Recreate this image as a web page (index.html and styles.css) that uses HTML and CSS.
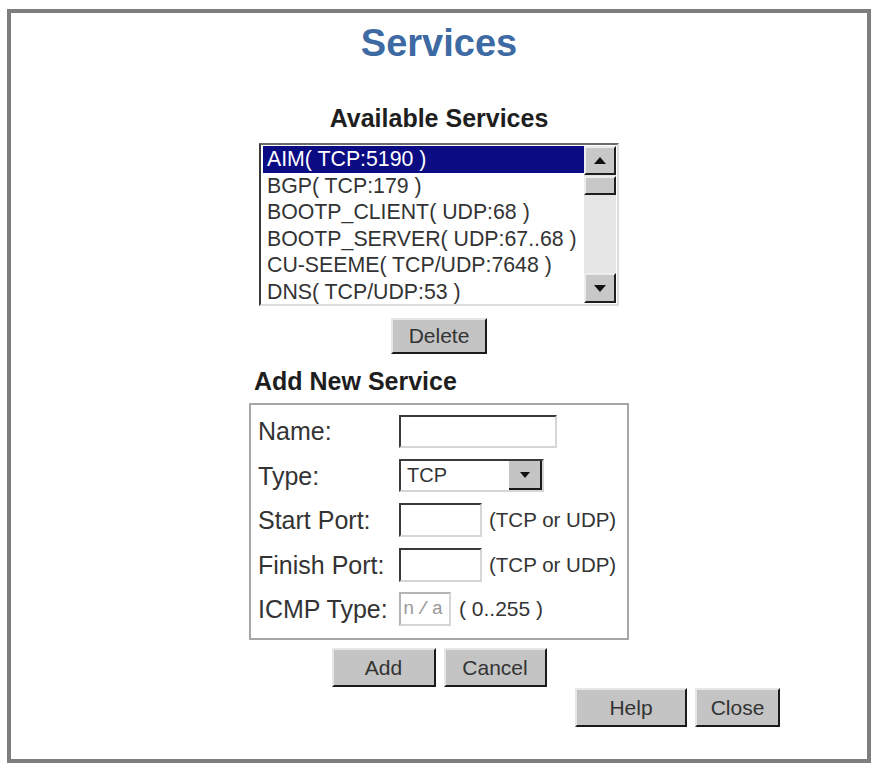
FILE: index.html
```html
<html>
    <head>
        <meta charset="utf-8">
        <link rel="stylesheet" href="styles.css">
    </head>
    <body>
        <div id="frame">
            <h1 class="title">Services</h1>

            <div class="column">
                <h2 class="heading centered">Available Services</h2>

                <div class="listbox">
                    <div class="options">
                        <div class="option selected">AIM( TCP:5190 )</div>
                        <div class="option">BGP( TCP:179 )</div>
                        <div class="option">BOOTP_CLIENT( UDP:68 )</div>
                        <div class="option">BOOTP_SERVER( UDP:67..68 )</div>
                        <div class="option">CU-SEEME( TCP/UDP:7648 )</div>
                        <div class="option">DNS( TCP/UDP:53 )</div>
                    </div>
                    <div class="scrollbar">
                        <div class="scrollbtn">
                            <svg width="12" height="7" viewBox="0 0 12 7"><path d="M0 7 L6 0 L12 7 Z" fill="#111"/></svg>
                        </div>
                        <div class="track"><div class="thumb"></div></div>
                        <div class="scrollbtn down">
                            <svg width="12" height="7" viewBox="0 0 12 7"><path d="M0 0 L12 0 L6 7 Z" fill="#111"/></svg>
                        </div>
                    </div>
                </div>

                <div class="row centered-row">
                    <button class="btn btn-delete">Delete</button>
                </div>

                <h2 class="heading">Add New Service</h2>

                <div class="formbox">
                    <label class="label">Name:</label>
                    <div class="field"><input class="textbox wide" type="text"></div>

                    <label class="label">Type:</label>
                    <div class="field">
                        <div class="select">
                            <span class="select-value">TCP</span>
                            <span class="select-arrow">
                                <svg width="10" height="6" viewBox="0 0 10 6"><path d="M0 0 L10 0 L5 6 Z" fill="#111"/></svg>
                            </span>
                        </div>
                    </div>

                    <label class="label">Start Port:</label>
                    <div class="field"><input class="textbox port" type="text"><span class="hint">(TCP or UDP)</span></div>

                    <label class="label">Finish Port:</label>
                    <div class="field"><input class="textbox port" type="text"><span class="hint">(TCP or UDP)</span></div>

                    <label class="label">ICMP Type:</label>
                    <div class="field"><input class="textbox icmp" type="text" value="n/a" readonly><span class="hint range">( 0..255 )</span></div>
                </div>

                <div class="row centered-row pair">
                    <button class="btn btn-add">Add</button>
                    <button class="btn btn-cancel">Cancel</button>
                </div>
            </div>

            <div class="row footer">
                <button class="btn btn-help">Help</button>
                <button class="btn btn-close">Close</button>
            </div>
        </div>
    </body>
</html>
```

FILE: styles.css
```css
body {
    margin: 0;
    background: #fff;
    font-family: 'Liberation Sans', Arial, sans-serif;
    color: #333;
}

#frame {
    box-sizing: border-box;
    width: 864px;
    height: 754px;
    margin: 9px 0 0 7px;
    border: 4px solid #7e7e7e;
    display: flex;
    flex-direction: column;
    align-items: center;
}

.title {
    margin: 8px 0 0 0;
    font-size: 38px;
    line-height: 44px;
    font-weight: 700;
    color: #3e6aa4;
}

.column {
    width: 380px;
    display: flex;
    flex-direction: column;
}

.heading {
    margin: 0;
    font-size: 25px;
    line-height: 30px;
    font-weight: 700;
    color: #1e1e1e;
    padding-left: 5px;
}

.heading.centered {
    margin-top: 38px;
    padding-left: 0;
    text-align: center;
}

/* list of services */
.listbox {
    box-sizing: border-box;
    width: 360px;
    height: 163px;
    margin: 10px auto 0 auto;
    border: 2px solid;
    border-color: #6a6a6a #dcdcdc #dcdcdc #3a3a3a;
    padding: 1px 1px 1px 2px;
    display: flex;
    background: #fff;
}

.options {
    flex: 1;
}

.option {
    height: 26.5px;
    line-height: 26.5px;
    font-size: 21.3px;
    padding-left: 4px;
    white-space: nowrap;
    color: #333;
}

.option.selected {
    background: #0b0b84;
    color: #fff;
}

.scrollbar {
    width: 32px;
    display: flex;
    flex-direction: column;
}

.scrollbtn {
    box-sizing: border-box;
    height: 29px;
    background: #c8c8c8;
    border: 2px solid;
    border-color: #ececec #1e1e1e #1e1e1e #ececec;
    display: flex;
    align-items: center;
    justify-content: center;
}

.scrollbtn.down {
    height: 30px;
}

.track {
    flex: 1;
    background: #e6e6e6;
}

.thumb {
    box-sizing: border-box;
    height: 19px;
    margin-top: 1px;
    background: #c8c8c8;
    border: 2px solid;
    border-color: #ececec #1e1e1e #1e1e1e #ececec;
}

/* button rows */
.row {
    display: flex;
    gap: 8px;
}

.centered-row {
    justify-content: center;
    margin: 12px 0 12px 0;
}

.pair {
    margin: 8px 0 0 0;
}

.footer {
    width: 100%;
    box-sizing: border-box;
    justify-content: flex-end;
    padding-right: 87px;
    margin-top: 1px;
}

.btn {
    box-sizing: border-box;
    height: 39px;
    background: #c4c4c4;
    border: 2px solid;
    border-color: #e6e6e6 #1a1a1a #1a1a1a #e6e6e6;
    font-family: 'Liberation Sans', Arial, sans-serif;
    font-size: 21px;
    color: #333;
    padding: 0;
}

.btn-delete { width: 96px; height: 36px; }
.btn-add { width: 104px; }
.btn-cancel { width: 103px; }
.btn-help { width: 112px; }
.btn-close { width: 85px; }

/* new service form */
.formbox {
    box-sizing: border-box;
    height: 237px;
    margin-top: 7px;
    border: 2px solid #a6a6a6;
    padding: 9px 8px 12px 7px;
    display: grid;
    grid-template-columns: 141px 1fr;
    grid-auto-rows: 34px;
    row-gap: 10.5px;
}

.label {
    font-size: 25px;
    line-height: 34px;
    color: #333;
    white-space: nowrap;
}

.field {
    display: flex;
    align-items: center;
}

.textbox {
    box-sizing: border-box;
    height: 33px;
    border: 2px solid;
    border-color: #3a3a3a #d6d6d6 #d6d6d6 #3a3a3a;
    background: #fff;
    padding: 0 3px;
    outline: none;
}

.textbox.wide { width: 158px; }
.textbox.port { width: 83px; height: 34px; }

.textbox.icmp {
    width: 52px;
    height: 34px;
    border-color: #b4b4b4 #d6d6d6 #d6d6d6 #b4b4b4;
    font-family: 'Liberation Mono', monospace;
    font-size: 19px;
    letter-spacing: 3px;
    color: #9a9a9a;
    padding: 0 0 0 2px;
}

.hint {
    margin-left: 7px;
    font-size: 20.5px;
    color: #333;
    white-space: nowrap;
}

.hint.range {
    margin-left: 8px;
    font-size: 21px;
}

.select {
    box-sizing: border-box;
    width: 145px;
    height: 33px;
    border: 2px solid;
    border-color: #3a3a3a #d6d6d6 #d6d6d6 #3a3a3a;
    display: flex;
    background: #fff;
}

.select-value {
    flex: 1;
    font-size: 20px;
    line-height: 29px;
    padding-left: 6px;
    color: #333;
}

.select-arrow {
    box-sizing: border-box;
    width: 33px;
    background: #c4c4c4;
    border-right: 2px solid #1a1a1a;
    border-bottom: 2px solid #1a1a1a;
    display: flex;
    align-items: center;
    justify-content: center;
}
```
